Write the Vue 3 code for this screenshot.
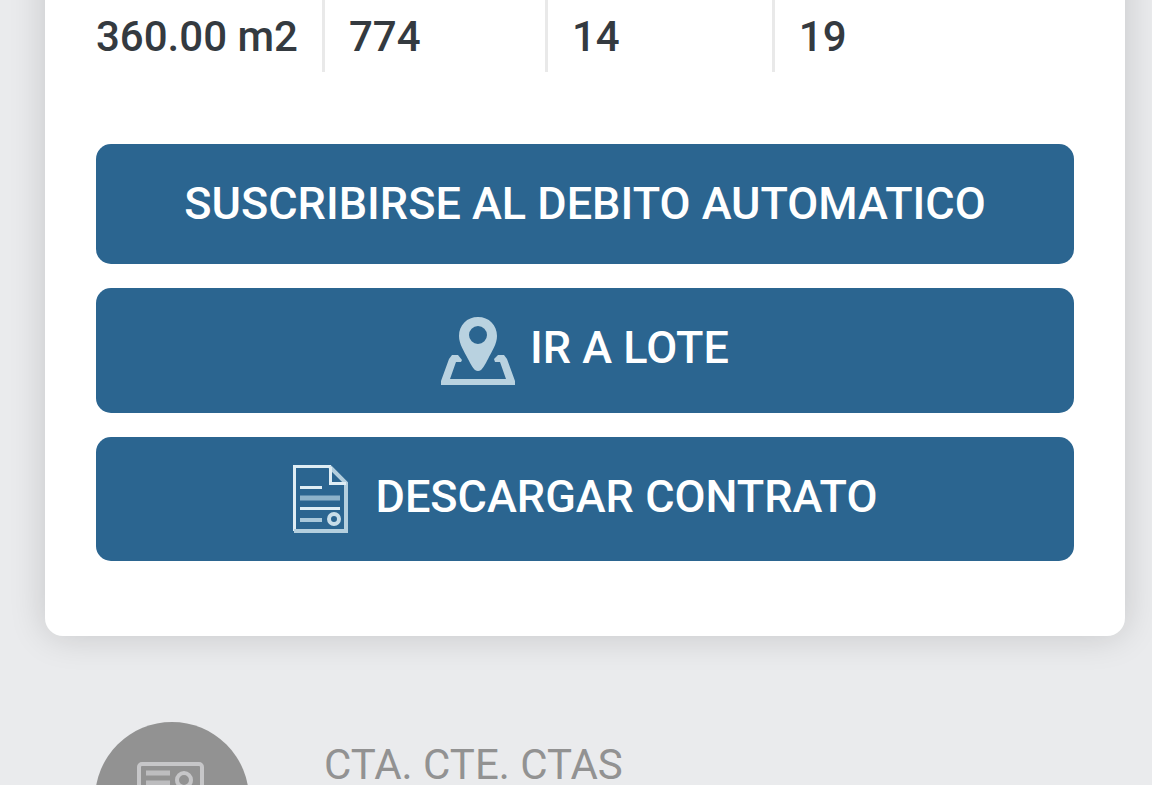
<script setup>
const lot = ['360.00 m2', '774', '14', '19']
</script>

<template>
  <main class="page">
    <section class="card">
      <table class="lot">
        <tbody>
          <tr>
            <td v-for="value in lot" :key="value">{{ value }}</td>
          </tr>
        </tbody>
      </table>
      <div class="actions">
        <button type="button" class="action">SUSCRIBIRSE AL DEBITO AUTOMATICO</button>
        <button type="button" class="action with-icon">
          <svg class="pin" viewBox="0 0 75 69" aria-hidden="true">
            <path fill="#b9d2e0" fill-rule="evenodd" d="M37 1C26 1 18 9 18 20c0 8 5 15 9 23 3 6 5 9 7 11q3 2 6 0c2-2 4-5 7-11 4-8 9-15 9-23C56 9 48 1 37 1Zm0 9a9 9 0 1 1 0 18 9 9 0 0 1 0-18Z" />
            <path fill="#b9d2e0" d="M11 39h6l4 5-1 2h-5L9 63h56l-6-17h-5l-1-3 4-4h6l3 4 8 22v4H0v-4l8-22Z" />
          </svg>
          <span>IR A LOTE</span>
        </button>
        <button type="button" class="action with-icon wide">
          <svg class="doc" viewBox="0 0 56 69" fill="none" aria-hidden="true">
            <path stroke="#dfedf4" stroke-width="3" d="M1.500 66V1.500H38" />
            <path stroke="#b4cfde" stroke-width="4" d="M37 2 53 18V66H1" />
            <path stroke="#dfedf4" stroke-width="3" d="M37.500 2V18.500H53" />
            <path stroke="#dfedf4" stroke-width="3" d="M7 22.500H29M7 43.500H47" />
            <path stroke="#8db2ca" stroke-width="5" d="M7 33H47" />
            <path stroke="#a9c8da" stroke-width="4" d="M7 55H29" />
            <circle cx="41" cy="54" r="5" stroke="#c8dde8" stroke-width="4" />
          </svg>
          <span>DESCARGAR CONTRATO</span>
        </button>
      </div>
    </section>

    <section class="account">
      <svg class="badge" viewBox="0 0 154 154" fill="none" aria-hidden="true">
        <circle cx="77" cy="77" r="77" fill="#929292" />
        <rect x="44" y="42" width="63" height="68" rx="3" stroke="#c6c6c8" stroke-width="4" />
        <path stroke="#bdbdbf" stroke-width="5" d="M51 51H75M51 61H75M51 71H75" />
        <circle cx="89" cy="58" r="7" stroke="#c6c6c8" stroke-width="4" />
      </svg>
      <span>CTA. CTE. CTAS</span>
    </section>
  </main>
</template>

<style>
body {
  margin: 0;
  background: #eaebed;
}
</style>

<style scoped>
.page {
  height: 100vh;
  overflow: hidden;
  box-sizing: border-box;
  padding: 0 27px 0 45px;
  background: #eaebed;
  font-family: Roboto, "Liberation Sans", sans-serif;
}
.card {
  margin-top: -48px;
  padding: 48px 51px 75px;
  background: #fff;
  border-radius: 18px;
  box-shadow: 0 0 36px rgba(0, 0, 0, 0.16);
}
.lot {
  width: 100%;
  table-layout: fixed;
  border-collapse: separate;
  border-spacing: 0;
  color: #343a40;
  font-size: 42px;
  font-weight: 500;
  line-height: 50px;
}
.lot td {
  box-sizing: border-box;
  padding: 12px 0 10px 24px;
  border-left: 3px solid #e9e9e9;
  white-space: nowrap;
}
.lot td:nth-child(1) {
  width: 23.1%;
  padding-left: 0;
  border-left: 0;
}
.lot td:nth-child(2) {
  width: 22.8%;
}
.lot td:nth-child(3) {
  width: 23.2%;
}
.actions {
  display: flex;
  flex-direction: column;
  gap: 24px;
  margin-top: 72px;
}
.action {
  display: flex;
  align-items: center;
  justify-content: center;
  min-height: 120px;
  padding: 0 24px;
  border: 0;
  border-radius: 15px;
  background: #2b6590;
  color: #fff;
  font-family: inherit;
  font-size: 45px;
  font-weight: 500;
  line-height: 54px;
  cursor: pointer;
}
.with-icon {
  gap: 14px;
  min-height: 125px;
}
.with-icon span {
  padding-bottom: 5px;
}
.wide {
  gap: 27px;
  min-height: 124px;
}
.pin {
  width: 75px;
  height: 69px;
}
.doc {
  width: 56px;
  height: 69px;
}
.account {
  display: flex;
  align-items: flex-start;
  gap: 75px;
  margin: 86px 50px 0;
  color: #929292;
  font-size: 42px;
  line-height: 40px;
}
.account span {
  padding-top: 23px;
}
.badge {
  flex: none;
  width: 154px;
  height: 154px;
}
</style>
